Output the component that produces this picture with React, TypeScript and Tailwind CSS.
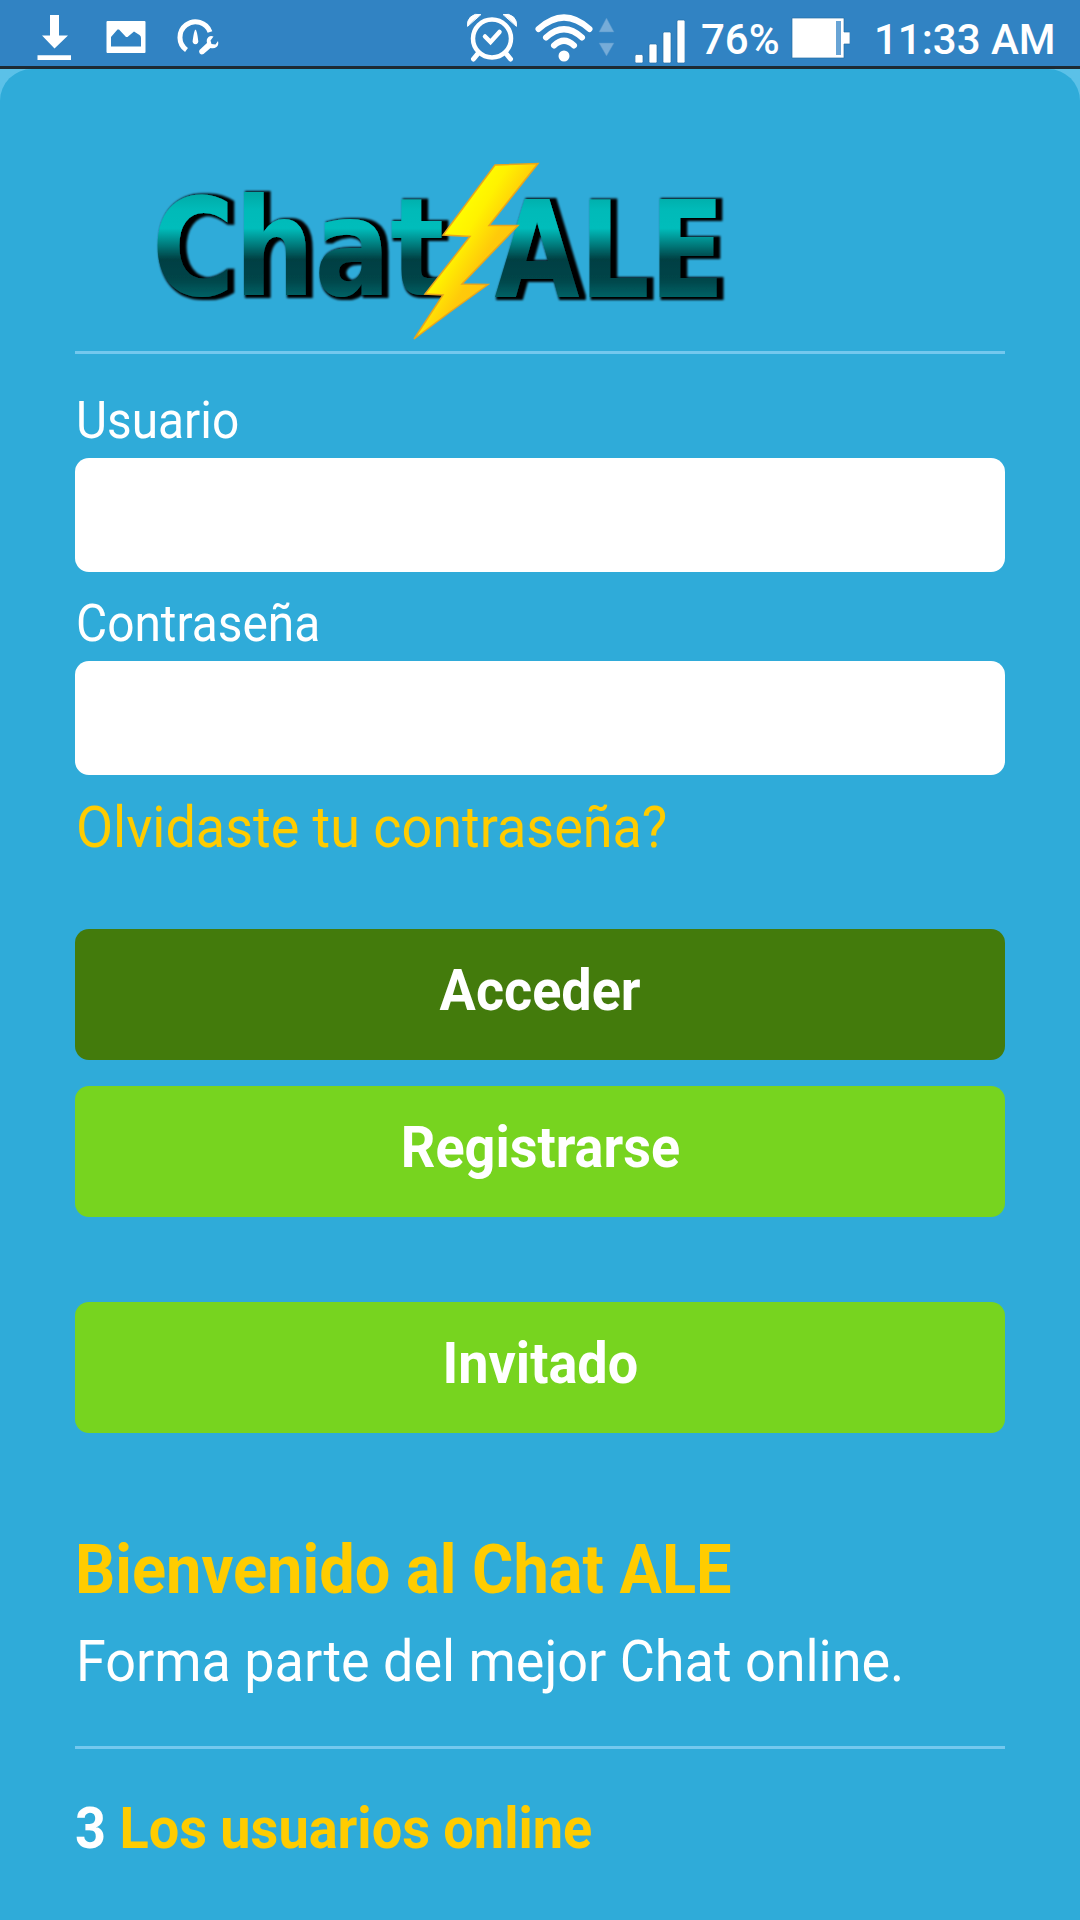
import React, { useState } from "react";

function StatusBar() {
  return (
    <header className="flex h-[69px] items-center justify-between border-b-3 border-[#1d2a33] bg-[#3183c3] pr-[25px] pl-[37px] text-white">
      <div className="flex items-center">
        {/* Download */}
        <svg className="h-[66px] w-[35px]" viewBox="37 0 35 66" fill="currentColor">
          <path d="M50 15h9v20.500h9L54.500 48.500 42 35.500h8zM37.500 55.300h33.500v4.700H37.500z" />
        </svg>
        {/* Screenshot */}
        <svg className="ml-[34px] h-[66px] w-[40px]" viewBox="106 0 40 66" fill="currentColor">
          <path
            fillRule="evenodd"
            d="M107.500 21h37q1 0 1 1v30q0 1-1 1h-37q-1 0-1-1V22q0-1 1-1zM111 46.500h30V38q0-2-1.500-3L134 31.500 127.500 37h-1.500L119 29.500h-1.500L111 37z"
          />
        </svg>
        {/* Performance */}
        <svg className="ml-[31px] h-[66px] w-[42px]" viewBox="177 0 42 66" fill="currentColor">
          <path
            d="M186.500 50A15.500 15.500 0 1 1 210 32"
            fill="none"
            stroke="currentColor"
            strokeWidth="5"
          />
          <path d="M195.500 29.500q1.500 1 2.700 11a2.900 2.900 0 1 1-5.500 0q1.300-10 2.800-11z" />
          <path d="M199.500 50l7.500-7q-1-4 1.500-6 2-1.500 5-.5l-3 4 1 3.500 4 .5 2.500-3.500q1 4-1.500 6-2.500 2-6 1l-7 6q-2 1-3.700-.5-1.300-1.700-.3-3.500z" />
        </svg>
      </div>

      <div className="flex items-center">
        {/* Alarm */}
        <svg className="h-[66px] w-[52px]" viewBox="466 0 52 66" fill="none" stroke="white" strokeLinecap="round">
          <circle cx="492" cy="38.500" r="19" strokeWidth="4.500" />
          <path d="M485 36.500l5.500 5.500 9-10" strokeWidth="4.500" />
          <path d="M478 53.500l-4.500 5.500M506 53.500l4.500 5.500" strokeWidth="5" />
          <path d="M467.500 26q-1-5 3-9 4.500-4 10-2.500zM516.500 26q1-5-3-9-4.500-4-10-2.500z" fill="white" strokeWidth="1" />
        </svg>
        {/* Wifi */}
        <svg className="ml-[17px] h-[66px] w-[58px]" viewBox="535 0 58 66" fill="none" stroke="white" strokeLinecap="round">
          <path d="M538.500 29Q564 6 589.500 29" strokeWidth="6" />
          <path d="M546 37.500Q564 21 582 37.500" strokeWidth="6" />
          <path d="M554 45.500Q564 36 574 45.500" strokeWidth="6" />
          <circle cx="564" cy="56" r="5.500" fill="white" stroke="none" />
        </svg>
        <svg className="ml-[5px] h-[66px] w-[17px]" viewBox="598 0 17 66" fill="#76acd8">
          <path d="M606.500 18l7.500 14h-15zM599 43h15l-7.500 13z" stroke="#5294cb" strokeWidth=".5" />
        </svg>
        {/* Signal */}
        <svg className="ml-[20px] h-[66px] w-[50px]" viewBox="635 0 50 66" fill="white" stroke="#276da5" strokeWidth=".7">
          <rect x="635" y="54.500" width="8" height="8.500" rx="1.500" />
          <rect x="649" y="44" width="8" height="19" rx="1.500" />
          <rect x="663" y="32" width="8" height="31" rx="1.500" />
          <rect x="677" y="20" width="8" height="43" rx="1.500" />
        </svg>
        <span className="ml-[16px] h-[66px] w-[78px] pt-[7px] text-[42px] leading-[66px] font-medium whitespace-nowrap">
          76%
        </span>
        {/* Battery */}
        <svg className="ml-[12px] h-[66px] w-[59px]" viewBox="791 0 59 66">
          <path d="M792 18h52v14h6v12h-6v14h-52z" fill="white" stroke="#276da5" strokeWidth=".7" />
          <path d="M836 21h5v34h-5z" fill="#68a4d5" />
        </svg>
        <span className="ml-[24px] h-[66px] w-[181px] pt-[7px] text-[42px] leading-[66px] font-medium whitespace-nowrap">
          11:33 AM
        </span>
      </div>
    </header>
  );
}

function Logo() {
  return (
    <svg className="ml-[55px] h-[190px] w-[620px]" viewBox="130 155 620 190">
      <defs>
        <linearGradient id="teal" gradientUnits="userSpaceOnUse" x1="0" y1="193" x2="0" y2="300">
          <stop offset="0" stopColor="#00aaa6" />
          <stop offset=".15" stopColor="#00bab8" />
          <stop offset=".33" stopColor="#00bdbb" />
          <stop offset=".48" stopColor="#007d7e" />
          <stop offset=".62" stopColor="#004043" />
          <stop offset=".8" stopColor="#004448" />
          <stop offset="1" stopColor="#00666a" />
        </linearGradient>
        <linearGradient id="bolt" gradientUnits="userSpaceOnUse" x1="445" y1="225" x2="510" y2="265">
          <stop offset="0" stopColor="#ffff00" />
          <stop offset=".3" stopColor="#fff200" />
          <stop offset=".65" stopColor="#ffca0a" />
          <stop offset="1" stopColor="#ffc20e" />
        </linearGradient>
        {/* Black edge pushed out to the right of the letters */}
        <filter id="extrude" x="-5%" y="-10%" width="112%" height="120%">
          <feMorphology in="SourceAlpha" operator="dilate" radius="3 2" />
          <feOffset dx="3.500" dy=".5" />
          <feGaussianBlur stdDeviation=".8" result="edge" />
          <feMerge>
            <feMergeNode in="edge" />
            <feMergeNode in="SourceGraphic" />
          </feMerge>
        </filter>
      </defs>
      <g className="font-['DejaVu_Sans',sans-serif] font-bold" fill="url(#teal)">
        <text x="152" y="295" fontSize="135" textLength="292" lengthAdjust="spacingAndGlyphs" filter="url(#extrude)">
          Chat
        </text>
        <text x="494.500" y="297" fontSize="133" textLength="230" lengthAdjust="spacingAndGlyphs" filter="url(#extrude)">
          ALE
        </text>
      </g>
      <path
        d="M495 165L538 163.500 489 225.500 518 225.500 462 284 488 284.500 450 312 414 339 443 295 425 294 470 236.500 443 235z"
        fill="url(#bolt)"
        stroke="#e9a51c"
        strokeWidth="1.500"
      />
    </svg>
  );
}

function Field({ label, type, value, onChange }: any) {
  return (
    <label className="block">
      <span className="ml-px block h-[58px] origin-left scale-x-[0.920] text-[52px] leading-[58px]">{label}</span>
      <input
        type={type}
        value={value}
        onChange={(e) => onChange(e.target.value)}
        className="mt-[8px] block h-[114px] w-full rounded-[14px] bg-white px-6 text-[48px] text-gray-800 outline-none"
      />
    </label>
  );
}

function Button({ children, className }: any) {
  return (
    <button
      type="button"
      className={`block h-[131px] w-full rounded-[14px] pb-[7px] text-[57px] leading-[66px] font-bold ${className}`}
    >
      <span className="inline-block scale-x-[0.947]">{children}</span>
    </button>
  );
}

export default function App() {
  const [user, setUser] = useState("");
  const [password, setPassword] = useState("");

  return (
    <div className="h-[1920px] w-[1080px] overflow-hidden bg-[#5bc1e8] font-[Roboto,sans-serif] text-white">
      <StatusBar />
      <main className="h-[1851px] rounded-t-[32px] bg-[#2fabd9] px-[75px] pt-[86px]">
        <Logo />
        <hr className="mt-[6px] h-[3px] border-0 bg-[#74c8ee]" />

        <form className="mt-[38px]">
          <Field label="Usuario" type="text" value={user} onChange={setUser} />
          <div className="mt-[23px]">
            <Field label="Contraseña" type="password" value={password} onChange={setPassword} />
          </div>
          <a href="#" className="mt-[20px] ml-px block h-[66px] origin-left scale-x-[0.946] text-[57px] leading-[66px] text-[#ffcc00]">
            Olvidaste tu contraseña?
          </a>
          <Button className="mt-[68px] bg-[#437b0c]">Acceder</Button>
          <Button className="mt-[26px] bg-[#77d41f]">Registrarse</Button>
          <Button className="mt-[85px] bg-[#77d41f]">Invitado</Button>
        </form>

        <h1 className="mt-[97px] h-[80px] origin-left scale-x-[0.928] text-[68px] leading-[80px] font-bold text-[#ffcc00]">
          Bienvenido al Chat ALE
        </h1>
        <p className="mt-[19px] ml-px h-[66px] origin-left scale-x-[0.946] text-[57px] leading-[66px]">
          Forma parte del mejor Chat online.
        </p>
        <hr className="mt-[51px] h-[3px] border-0 bg-[#74c8ee]" />
        <p className="mt-[47px] h-[66px] origin-left scale-x-[0.948] text-[57px] leading-[66px] font-bold">
          3 <span className="text-[#ffcc00]">Los usuarios online</span>
        </p>
      </main>
    </div>
  );
}
